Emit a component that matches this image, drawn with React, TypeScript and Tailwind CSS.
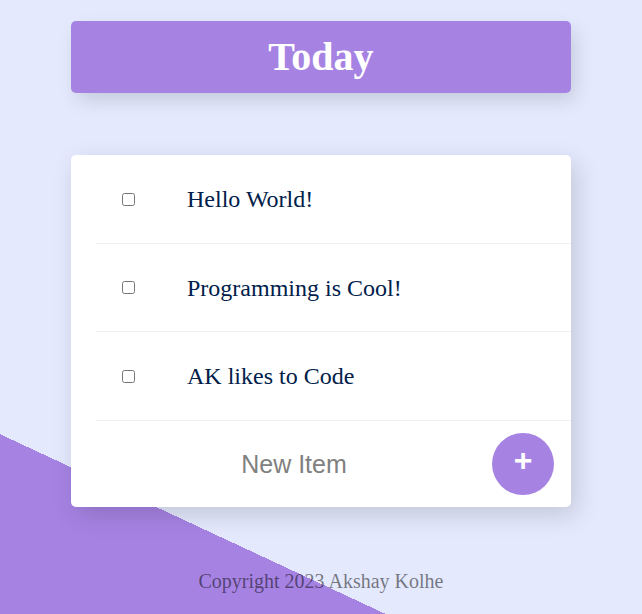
import * as React from "react";

const items = [
  { text: "Hello World!", h: "h-[89px]" },
  { text: "Programming is Cool!", h: "h-[88px]" },
  { text: "AK likes to Code", h: "h-[89px]" },
];

export default function App() {
  return (
    <div
      className="h-screen overflow-hidden bg-[#E4E9FD] bg-[linear-gradient(25deg,#A683E3_163px,#E4E9FD_163px)]"
      style={{ fontFamily: '"Liberation Serif", "Times New Roman", serif' }}
    >
      <div className="w-[500px] mx-auto pt-[21px]">
        <div className="h-[72px] rounded-[5px] bg-[#A683E3] flex items-center justify-center shadow-[5px_8px_20px_-2px_rgba(0,0,0,0.15)]">
          <h1 className="text-[40px] font-bold text-white leading-none">Today</h1>
        </div>

        <div className="mt-[62px] bg-white rounded-[5px] shadow-[5px_8px_25px_0_rgba(0,0,0,0.15)]">
          {items.map((item, index) => (
            <div
              key={index}
              className={`${item.h} ml-[25px] flex items-center border-b border-[#F1F1F1]`}
            >
              <input type="checkbox" className="ml-[26px] w-[13px] h-[13px] m-0" />
              <p className="ml-[52px] text-[24px] text-[#00204a]">{item.text}</p>
            </div>
          ))}
          <div className="h-[86px] ml-[25px] flex items-center">
            <input
              type="text"
              placeholder="New Item"
              className="flex-1 min-w-0 h-[60px] text-center text-[25px] bg-transparent outline-none placeholder:text-[#808080]"
              style={{ fontFamily: '"Liberation Sans", Arial, sans-serif' }}
            />
            <button
              className="w-[62px] h-[62px] mr-[17px] rounded-full bg-[#A683E3] text-white text-[32px] font-bold leading-none pb-[8px] flex items-center justify-center"
              style={{ fontFamily: '"Liberation Sans", Arial, sans-serif' }}
            >
              +
            </button>
          </div>
        </div>

        <footer className="mt-[63px] text-center text-[20px] leading-[23px] text-black/50">
          Copyright 2023 Akshay Kolhe
        </footer>
      </div>
    </div>
  );
}
